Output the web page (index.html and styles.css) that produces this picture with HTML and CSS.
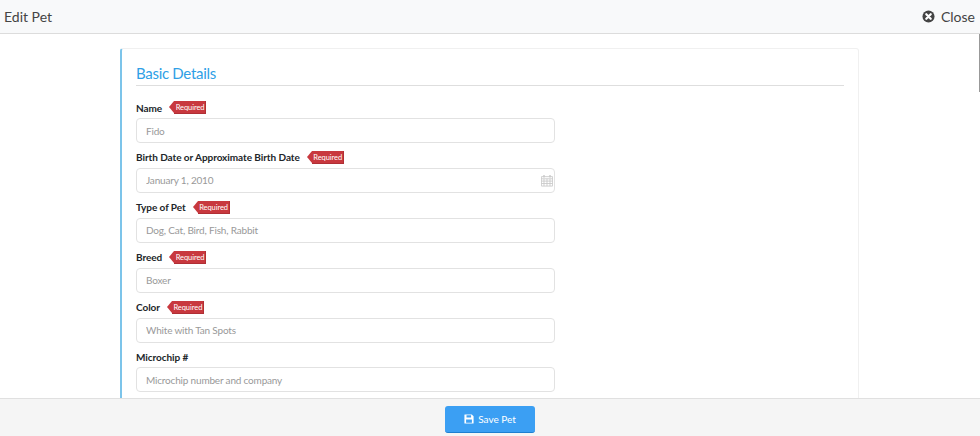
FILE: index.html
```html
<!DOCTYPE html>
<html lang="en">
<head>
<meta charset="utf-8">
<title>Edit Pet</title>
<link rel="stylesheet" href="styles.css">
</head>
<body>
<div class="page">
  <header class="topbar">
    <h1 class="topbar-title">Edit Pet</h1>
    <button class="close" type="button">
      <svg class="close-icon" viewBox="0 0 14 14" aria-hidden="true"><circle cx="7" cy="7" r="6.500" fill="#444"/><path d="M4.600 4.600l4.800 4.800M9.400 4.600l-4.800 4.800" stroke="#fff" stroke-width="2.400" stroke-linecap="round"/></svg>
      <span>Close</span>
    </button>
  </header>
  <main class="content">
    <div class="scroll-thumb"></div>
    <section class="card">
      <h2 class="card-title">Basic Details</h2>
      <form class="fields">
        <div class="field">
          <label class="label">Name <span class="req">Required</span></label>
          <input class="input" placeholder="Fido">
        </div>
        <div class="field">
          <label class="label">Birth Date or Approximate Birth Date <span class="req">Required</span></label>
          <div class="input-wrap">
            <input class="input" placeholder="January 1, 2010">
            <svg class="cal" viewBox="0 0 14 14" aria-hidden="true"><path d="M.5 2.500h13v11H.5zM.5 5h13M.5 7.700h13M.5 10.500h13M3.500 5v8.500M7 5v8.500M10.500 5v8.500" fill="none" stroke="#c8c8c8"/><path d="M3.500 .5v3M10.500 .5v3" stroke="#c8c8c8" stroke-width="1.600"/></svg>
          </div>
        </div>
        <div class="field">
          <label class="label">Type of Pet <span class="req">Required</span></label>
          <input class="input" placeholder="Dog, Cat, Bird, Fish, Rabbit">
        </div>
        <div class="field">
          <label class="label">Breed <span class="req">Required</span></label>
          <input class="input" placeholder="Boxer">
        </div>
        <div class="field">
          <label class="label">Color <span class="req">Required</span></label>
          <input class="input" placeholder="White with Tan Spots">
        </div>
        <div class="field">
          <label class="label">Microchip #</label>
          <input class="input" placeholder="Microchip number and company">
        </div>
      </form>
    </section>
  </main>
  <footer class="bottombar">
    <button class="save" type="button">
      <svg class="save-icon" viewBox="0 0 12 12" aria-hidden="true"><path fill-rule="evenodd" d="M1 .5h8.300L11.500 2.700V11a.5.5 0 0 1-.5.5H1a.5.5 0 0 1-.5-.5V1A.5.5 0 0 1 1 .5zM3 1.500V4.300h5.500V1.500zM2.500 6.500v4h7v-4z" fill="#fff"/></svg>
      <span>Save Pet</span>
    </button>
  </footer>
</div>
</body>
</html>
```

FILE: styles.css
```css
* { box-sizing: border-box; }
html, body { margin: 0; height: 100%; overflow: hidden; }
body { font-family: Lato, "Noto Sans", sans-serif; background: #fff; color: #212529; }
.page { display: flex; flex-direction: column; height: 436px; }
.topbar { flex: none; height: 34px; display: flex; align-items: center; justify-content: space-between; padding: 0 5px 1px 4px; background: #f8f9fa; border-bottom: 1px solid #dcdcdc; }
.topbar-title { margin: 0; font-size: 14px; font-weight: 400; color: #444; }
.close { display: flex; align-items: center; gap: 6px; padding: 0; border: 0; background: none; font: inherit; font-size: 14px; color: #444; }
.close-icon { width: 13px; height: 13px; }
.content { position: relative; flex: 1; min-height: 0; overflow: hidden; padding: 14px 121px 0 120px; }
.scroll-thumb { position: absolute; right: 0; top: 0; width: 1px; height: 58px; background: #999; }
.card { min-height: 400px; padding: 14px 14px 0 14px; border: 1px solid #f0f0f0; border-left: 2px solid #7cc4ea; border-radius: 3px 3px 0 0; }
.card-title { margin: 0 0 11px; height: 23px; font-size: 15px; font-weight: 400; line-height: 20px; letter-spacing: -.3px; color: #2f9fe6; border-bottom: 1px solid #dedede; }
.fields { display: flex; flex-direction: column; gap: 3.880px; }
.field { width: 419px; height: 46px; display: flex; flex-direction: column; }
.label { height: 21px; display: flex; align-items: center; gap: 12px; font-size: 10px; font-weight: 700; letter-spacing: -.06px; color: #212529; }
.req { position: relative; height: 13px; padding: 0 1.500px 0 1.500px; display: inline-flex; align-items: center; background: #c8383e; box-shadow: inset -1px -1px 0 #b02f35; color: #fff; font-size: 7.500px; font-weight: 400; }
.req::before { content: ""; position: absolute; left: -5px; top: 0; border: 6.500px solid transparent; border-left: 0; border-right: 5px solid #c8383e; }
.input-wrap { position: relative; }
.input { display: block; width: 100%; height: 25px; padding: 0 9px; border: 1px solid #e2e2e2; border-radius: 4px; background: #fff; font: inherit; font-size: 10px; letter-spacing: -.18px; color: #444; outline: 0; }
.input::placeholder { color: #999; opacity: 1; }
.cal { position: absolute; right: 2px; top: 6px; width: 12px; height: 13px; }
.bottombar { flex: none; height: 38px; display: flex; justify-content: center; padding-top: 7px; background: #f5f5f5; border-top: 1px solid #e0e0e0; }
.save { width: 90px; height: 27px; display: flex; align-items: center; justify-content: center; gap: 4px; padding: 0; border: 0; border-bottom: 1px solid #1f7fd0; border-radius: 3px; background: #3b9ff3; color: #fff; font: inherit; font-size: 10px; }
.save-icon { width: 10px; height: 10px; }
```
